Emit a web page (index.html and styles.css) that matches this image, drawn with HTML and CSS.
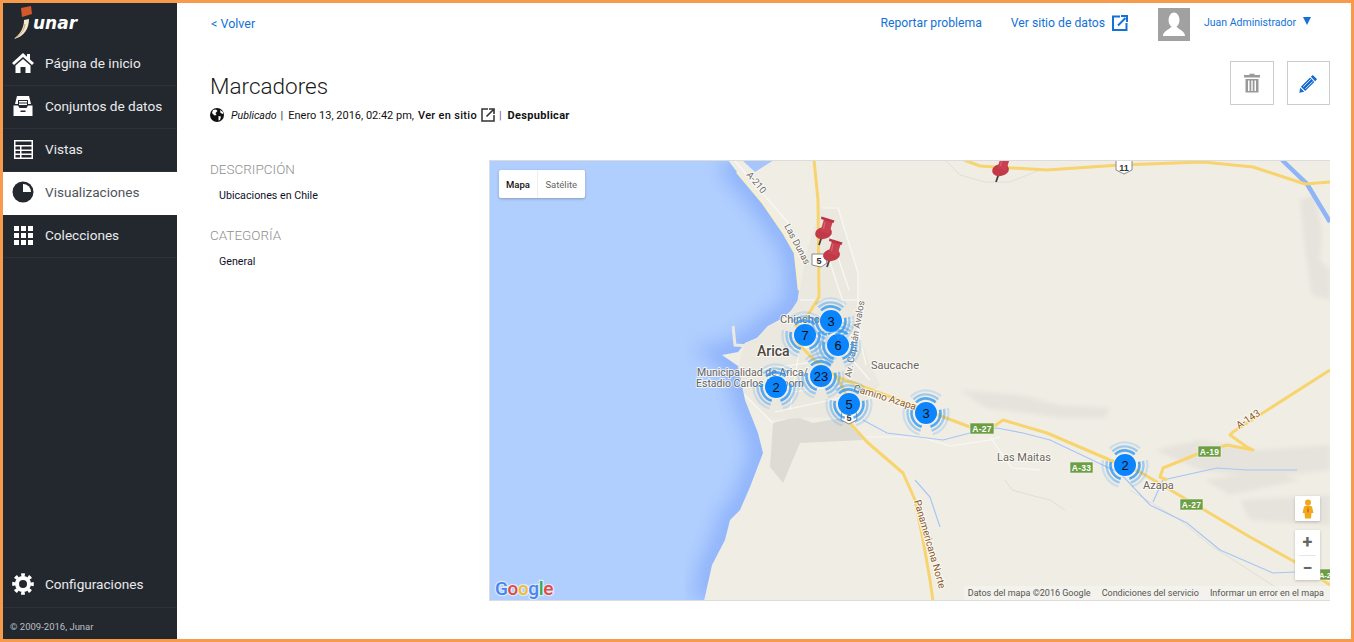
FILE: index.html
```html
<!DOCTYPE html>
<html lang="es">
<head>
<meta charset="utf-8">
<title>Marcadores</title>
<link rel="stylesheet" href="styles.css">
</head>
<body>
<aside class="sidebar">
  <div class="logo">
    <svg class="logo-mark" viewBox="0 0 30 36" width="30" height="36">
      <path d="M9 4 L19 2 L20 10 L10 13 Z" fill="#d4582a"/>
      <path d="M12 16 L17 15 C17 24 13 32 2 35 C8 30 12 24 12 16 Z" fill="#f3e9d2"/>
      <path d="M3 34 C9 31 12 26 13 20" stroke="#d9a05b" stroke-width="1" fill="none"/>
    </svg>
    <span class="logo-word">unar</span>
  </div>
  <nav class="nav">
    <a class="nav-item">
      <svg class="nav-icon" viewBox="0 0 22 22"><path d="M11 1 L0 11 L2 13 L11 5 L20 13 L22 11 L18 7.400 V2 H15 V4.700 Z" fill="#fff"/><path d="M3.500 13.500 L11 7 L18.500 13.500 V21 H13.500 V15 H8.500 V21 H3.500 Z" fill="#fff"/></svg>
      <span>Página de inicio</span>
    </a>
    <a class="nav-item">
      <svg class="nav-icon" viewBox="0 0 22 22"><path d="M5 1 H17 L19 9 H16 V5 H6 V9 H3 Z M7 6 H15 V7.500 H7 Z M7 8.500 H15 V10 H7 Z" fill="#fff"/><path d="M1.500 10.500 H6 L7.500 13 H14.500 L16 10.500 H20.500 V21 H1.500 Z" fill="#fff"/><rect x="8.500" y="15.500" width="5" height="1.500" fill="#23282f"/></svg>
      <span>Conjuntos de datos</span>
    </a>
    <a class="nav-item">
      <svg class="nav-icon" viewBox="0 0 22 22"><path d="M2 2 H21 V21 H2 Z M3.500 3.500 V7 H19.500 V3.500 Z M3.500 8.500 V11.500 H8 V8.500 Z M9.500 8.500 V11.500 H19.500 V8.500 Z M3.500 13 V15.500 H8 V13 Z M9.500 13 V15.500 H19.500 V13 Z M3.500 17 V19.500 H8 V17 Z M9.500 17 V19.500 H19.500 V17 Z" fill="#fff" fill-rule="evenodd"/></svg>
      <span>Vistas</span>
    </a>
    <a class="nav-item is-active">
      <svg class="nav-icon" viewBox="0 0 22 22"><circle cx="11" cy="11" r="10.500" fill="#23282f"/><path d="M11 11 V3 A8 8 0 0 1 19 11 Z" fill="#fff"/></svg>
      <span>Visualizaciones</span>
    </a>
    <a class="nav-item">
      <svg class="nav-icon" viewBox="0 0 22 22"><g fill="#fff"><rect x="2" y="2" width="5" height="5"/><rect x="9" y="2" width="5" height="5"/><rect x="16" y="2" width="5" height="5"/><rect x="2" y="9" width="5" height="5"/><rect x="9" y="9" width="5" height="5"/><rect x="16" y="9" width="5" height="5"/><rect x="2" y="16" width="5" height="5"/><rect x="9" y="16" width="5" height="5"/><rect x="16" y="16" width="5" height="5"/></g></svg>
      <span>Colecciones</span>
    </a>
  </nav>
  <div class="side-bottom">
    <a class="nav-item nav-config">
      <svg class="nav-icon" viewBox="0 0 22 22"><circle cx="11" cy="11" r="6" fill="none" stroke="#fff" stroke-width="4"/><circle cx="11" cy="11" r="9" fill="none" stroke="#fff" stroke-width="3.600" pathLength="80" stroke-dasharray="5 5" transform="rotate(-11 11 11)"/></svg>
      <span>Configuraciones</span>
    </a>
    <div class="copyright">© 2009-2016, Junar</div>
  </div>
</aside>

<main class="main">
  <header class="topbar">
    <a class="link back">&lt; Volver</a>
    <div class="top-right">
      <a class="link report">Reportar problema</a>
      <a class="link site">Ver sitio de datos
        <svg class="ext-blue" viewBox="0 0 16 16" width="16" height="16"><path d="M8 1.500 H1 V15 H14.500 V8" fill="none" stroke="#1272d8" stroke-width="2"/><path d="M6 10.500 L13.500 3 M9 1 H15 V7" fill="none" stroke="#1272d8" stroke-width="2"/></svg>
      </a>
      <div class="avatar">
        <svg viewBox="0 0 32 33" width="32" height="33"><rect width="32" height="33" fill="#a1a1a1"/><ellipse cx="16" cy="12" rx="5.500" ry="7.500" fill="#fff"/><path d="M5 28 C5 23 11 22 13 19 H19 C21 22 27 23 27 28 Z" fill="#fff"/></svg>
      </div>
      <a class="link user">Juan Administrador</a>
      <span class="caret"></span>
    </div>
  </header>

  <section class="title-row">
    <div>
      <h1 class="title">Marcadores</h1>
      <div class="meta">
        <svg class="globe" viewBox="0 0 14 14" width="14" height="14"><circle cx="7" cy="7" r="7" fill="#111"/><path d="M3 2 L6 1.500 L7.500 3 L5.500 5 L6.500 7 L4.500 7.500 L2 5 Z M8.500 8 L11 8.500 L10 12 L8.500 12.500 Z M10 2 L13 4 L13 6 L10.500 5 Z" fill="#fff"/></svg>
        <em class="status">Publicado</em>
        <span class="sep">|</span>
        <span class="date">Enero 13, 2016, 02:42 pm,</span>
        <a class="meta-link">Ver en sitio</a>
        <svg class="ext-dark" viewBox="0 0 14 14" width="14" height="14"><path d="M7 1 H1 V13 H13 V7" fill="none" stroke="#333" stroke-width="1.500"/><path d="M5.500 8.500 L12 2 M8 1 H13 V6" fill="none" stroke="#333" stroke-width="1.600"/></svg>
        <span class="sep sep-purple">|</span>
        <a class="meta-link bold">Despublicar</a>
      </div>
    </div>
    <div class="actions">
      <button class="action" type="button" aria-label="Eliminar">
        <svg viewBox="0 0 18 20" width="18" height="20"><path d="M6.500 2 V0.800 H11.500 V2 H17 V4.500 H1 V2 Z" fill="#999"/><path d="M2.500 6 H15.500 V19.500 H2.500 Z M5 7.500 V18 H6.500 V7.500 Z M8.300 7.500 V18 H9.700 V7.500 Z M11.500 7.500 V18 H13 V7.500 Z" fill="#999" fill-rule="evenodd"/></svg>
      </button>
      <button class="action" type="button" aria-label="Editar">
        <svg viewBox="0 0 20 20" width="19" height="19"><path d="M14.500 1 L19 5.500 L17 7.500 L12.500 3 Z M11.700 3.800 L16.200 8.300 L6.500 18 L2 13.500 Z" fill="#1468cf"/><path d="M1.300 14.500 L5.500 18.700 L0.300 19.700 Z" fill="#1468cf"/><path d="M4.500 13.500 L12.500 5.500 M6.800 15.500 L14.500 7.800" stroke="#fff" stroke-width=".9"/></svg>
      </button>
    </div>
  </section>

  <section class="content">
    <div class="details">
      <h2 class="label">DESCRIPCIÓN</h2>
      <p class="value">Ubicaciones en Chile</p>
      <h2 class="label label-next">CATEGORÍA</h2>
      <p class="value">General</p>
    </div>

    <div class="map">
      <svg class="map-canvas" viewBox="489 160 841 441" width="841" height="441">
        <defs>
          <filter id="soft" x="-5%" y="-5%" width="110%" height="110%"><feGaussianBlur stdDeviation="0.450"/></filter>
          <filter id="blur2" x="-10%" y="-10%" width="120%" height="120%"><feGaussianBlur stdDeviation="2"/></filter>
          <filter id="blur8" x="-20%" y="-20%" width="140%" height="140%"><feGaussianBlur stdDeviation="10"/></filter>
          <g id="cluster">
            <g fill="none" stroke="#2f97f3">
              <circle r="14.500" stroke-width="2.600" pathLength="360" stroke-dasharray="85 35" transform="rotate(107)" opacity=".8"/>
              <circle r="18.500" stroke-width="2.400" pathLength="360" stroke-dasharray="85 35" transform="rotate(107)" opacity=".42"/>
              <circle r="22.500" stroke-width="2.200" pathLength="360" stroke-dasharray="85 35" transform="rotate(107)" opacity=".18"/>
            </g>
            <circle r="12" fill="#fff" opacity=".35"/>
            <circle r="11" fill="#0b85fd"/>
          </g>
          <g id="pin">
            <path d="M0 0 L3 -9" stroke="#444" stroke-width="1.800"/>
            <ellipse cx="4.500" cy="-12" rx="8.500" ry="6" transform="rotate(-12 4.500 -12)" fill="#c23a48"/>
            <path d="M1.500 -14 L5 -26 L14 -24 L10 -11 Z" fill="#c94150"/>
            <path d="M2.500 -28.500 L15.500 -24.500 L14.500 -22 L2 -26 Z" fill="#b93342"/>
            <path d="M6 -23 L4.500 -16" stroke="#e47a80" stroke-width="1.200" opacity=".6"/>
          </g>
        </defs>

        <rect x="489" y="160" width="841" height="441" class="water"/>
        <path d="M728 160 L737 172 L763 203 L783 232 L795 253 L799 290 L797 305 L783 318 L768 326 L757 338 L745 343 L738 352 L722 355 L738 366 L745 400 L758 433 L763 453 L750 487 L740 510 L730 520 L725 540 L712 565 L704 601" class="coast-glow" filter="url(#blur8)"/>
        <path d="M728 160 L737 172 L763 203 L783 232 L795 253 L799 290 L797 305 L783 318 L768 326 L757 338 L745 343 L738 352 L722 355 L738 366 L745 400 L758 433 L763 453 L750 487 L740 510 L730 520 L725 540 L712 565 L704 601 L1330 601 L1330 160 Z" class="land" filter="url(#soft)"/>
        <path d="M733 326 L735 345 L752 346" class="breakwater" filter="url(#soft)"/>
        <path d="M737 172 L763 203 L783 232 L795 253 L799 290" class="beach"/>
        <path d="M742 160 L755 172 L774 160 Z" class="inlet"/>

        <g class="shades" filter="url(#blur2)">
          <path d="M960 390 L1020 395 L1060 405 L1110 408 L1105 418 L1060 418 L1020 412 L985 408 Z"/>
          <path d="M1300 200 L1315 195 L1322 230 L1320 260 L1330 270 L1330 300 L1312 295 L1305 250 Z"/>
          <path d="M1155 450 L1200 440 L1260 450 L1330 445 L1330 470 L1260 478 L1200 470 Z"/>
          <path d="M1240 500 L1330 495 L1330 525 L1250 520 Z"/>
          <path d="M1205 480 L1270 470 L1300 480 L1230 495 Z"/>
        </g>
        <path d="M770 467 L783 483 L800 443 L863 440 L847 417 L813 423 L797 417 L773 423 Z" class="gray-zone" filter="url(#soft)"/>
        <path d="M806 255 L820 208 L838 208 L858 275 L858 330 L870 365 L880 385 L850 417 L800 418 L770 420 L745 395 L738 366 L745 343 L757 338 L768 326 L785 320 L798 300 Z" class="urban" filter="url(#soft)"/>

        <g class="streets" filter="url(#soft)">
          <path d="M822 208 H838 L858 273 V330 L866 365"/>
          <path d="M829 230 L849 290 M826 250 L844 305 M808 320 H855 M800 300 L858 300 M790 340 L850 332 M760 352 L830 345 M748 372 L825 360 M765 395 L850 385 M775 412 L840 398"/>
          <path d="M773 423 L745 395 M845 352 L870 380 M800 345 L790 410"/>
          <path d="M867 437 L920 437 L950 446 L990 440 L1000 437"/>
          <path d="M734 160 L790 225"/>
          <path d="M990 437 L1012 468 L1040 470 M1070 468 L1100 460"/>
        </g>
        <g class="faint-lines" filter="url(#soft)">
          <path d="M1005 480 L1012 490 L1030 495 L1050 500 L1065 510"/>
          <path d="M1130 490 L1180 520 L1210 545 L1280 590"/>
          <path d="M945 160 L960 175 L985 182 L1010 182 L1040 170"/>
        </g>

        <g class="rivers" filter="url(#soft)">
          <path d="M863 420 L887 433 L943 440 L970 433 L997 428 L1023 433 L1050 440 L1107 467 L1120 473 L1150 505 L1187 523 L1220 550 L1273 573 L1295 572"/>
          <path d="M1153 502 L1163 480 L1217 468 L1247 470 L1297 470"/>
          <path d="M915 480 L930 497 L940 527"/>
        </g>
        <path d="M1282 160 L1307 184 L1330 222" class="river-wide" filter="url(#soft)"/>

        <g class="roads" filter="url(#soft)">
          <path d="M814 160 L818 200 L819 297 L808 315 L795 327"/>
          <path d="M795 340 L812 358 L837 377 L852 405 L850 423 L867 442 L903 473 L915 500 L923 540 L930 580 L933 601"/>
          <path d="M837 377 L880 393 L970 427 L993 427 L1003 420 L1047 433 L1110 460 L1140 472 L1250 537 L1295 562 L1330 585"/>
          <path d="M1330 370 L1233 432 L1230 435 L1247 447 L1253 450 L1227 445 L1200 453 L1163 468 L1160 477 L1167 480"/>
          <path d="M964 160 L980 166 L1047 170 L1120 165 L1203 162 L1253 167 L1305 184 L1330 182"/>
        </g>

        <g class="shield-green">
          <rect x="970" y="423" width="24" height="11"/><text x="982" y="432">A-27</text>
          <rect x="1070" y="462" width="23" height="11"/><text x="1081.500" y="471">A-33</text>
          <rect x="1198" y="446" width="23" height="11"/><text x="1209.500" y="455">A-19</text>
          <rect x="1180" y="499" width="23" height="11"/><text x="1191.500" y="508">A-27</text>
          <rect x="1320" y="569" width="12" height="11"/><text x="1325" y="578" class="shield-cut">A-2</text>
        </g>
        <g class="shield-white">
          <path d="M812 254 H825 L827 263 L821 267 L812 265 Z"/><text x="819" y="264">5</text>
          <path d="M842 411 H856 L857 420 L849 424 L841 420 Z"/><text x="849" y="421">5</text>
          <path d="M1116 160 H1132 L1132 170 L1124 174 L1116 170 Z"/><text x="1124" y="171">11</text>
        </g>

        <g class="map-text">
          <text x="780" y="323" class="t-place">Chinchorro</text>
          <text x="757" y="356" class="t-city">Arica</text>
          <text x="871" y="369" class="t-place">Saucache</text>
          <text x="697" y="376" class="t-small">Municipalidad de Arica/</text>
          <text x="696" y="387" class="t-small">Estadio Carlos Dittborn</text>
          <text x="997" y="461" class="t-place">Las Maitas</text>
          <text x="1143" y="489" class="t-place">Azapa</text>
          <text class="t-road" transform="translate(853 391) rotate(17)">Camino Azapa</text>
          <text class="t-road-gray" transform="translate(851 378) rotate(-80)">Av. Capitán Avalos</text>
          <text class="t-road-gray" transform="translate(784 226) rotate(62)">Las Dunas</text>
          <text class="t-road-gray" transform="translate(746 175) rotate(50)">A-210</text>
          <text class="t-road" transform="translate(914 501) rotate(74)">Panamericana Norte</text>
          <text class="t-road" transform="translate(1239 429) rotate(-33)">A-143</text>
        </g>

        <use href="#pin" x="819" y="245"/>
        <use href="#pin" x="827" y="267"/>
        <use href="#pin" x="996" y="182"/>

        <use href="#cluster" x="776" y="387"/>
        <use href="#cluster" x="821" y="376"/>
        <use href="#cluster" x="849" y="404"/>
        <use href="#cluster" x="926" y="413"/>
        <use href="#cluster" x="1125" y="465"/>
        <use href="#cluster" x="838" y="345"/>
        <use href="#cluster" x="805" y="335"/>
        <use href="#cluster" x="831" y="321"/>
        <g class="cluster-num">
          <text x="776" y="392">2</text>
          <text x="821" y="381">23</text>
          <text x="849" y="409">5</text>
          <text x="926" y="418">3</text>
          <text x="1125" y="470">2</text>
          <text x="838" y="350">6</text>
          <text x="805" y="340">7</text>
          <text x="831" y="326">3</text>
        </g>

        <text x="495" y="595" class="google"><tspan fill="#4a85ef">G</tspan><tspan fill="#e8483c">o</tspan><tspan fill="#f4bd25">o</tspan><tspan fill="#4a85ef">g</tspan><tspan fill="#34a853">l</tspan><tspan fill="#e8483c">e</tspan></text>
      </svg>

      <div class="map-type">
        <span class="type-btn is-on">Mapa</span>
        <span class="type-btn">Satélite</span>
      </div>
      <div class="map-tools">
        <div class="pegman">
          <svg viewBox="0 0 12 20" width="12" height="20"><circle cx="6" cy="3.500" r="3" fill="#f2a81d"/><path d="M2 7.500 Q6 5.500 10 7.500 L11.500 14 L9.500 14 L9 19.500 H3 L2.500 14 L0.500 14 Z" fill="#f2a81d"/><path d="M6 7 L7 12 L6 14 L5 12 Z" fill="#d9661f"/></svg>
        </div>
        <div class="zoom-box">
          <span class="zoom-btn">+</span>
          <span class="zoom-line"></span>
          <span class="zoom-btn">−</span>
        </div>
      </div>
      <div class="attribution">
        <span>Datos del mapa ©2016 Google</span>
        <span>Condiciones del servicio</span>
        <span>Informar un error en el mapa</span>
      </div>
    </div>
  </section>
</main>
</body>
</html>
```

FILE: styles.css
```css
* { box-sizing: border-box; }
html, body { margin: 0; padding: 0; height: 100%; overflow: hidden; }
body {
  width: 1354px;
  height: 642px;
  display: flex;
  border: 3px solid #f79a4b;
  background: #fff;
  font-family: Roboto, "Liberation Sans", sans-serif;
  color: #111;
}

/* Sidebar */
.sidebar {
  width: 174px;
  flex: none;
  display: flex;
  flex-direction: column;
  background: #23282f;
}
.logo { height: 40px; display: flex; align-items: flex-start; padding: 1px 0 0 9px; }
.logo-mark { display: block; flex: none; }
.logo-word {
  margin: 9px 0 0 -9px;
  font-family: "DejaVu Sans", sans-serif;
  font-weight: 700;
  font-style: italic;
  font-size: 17px;
  line-height: 20px;
  color: #fff;
}
.nav { display: flex; flex-direction: column; }
.nav-item {
  height: 43px;
  display: flex;
  align-items: center;
  gap: 11px;
  padding: 0 0 3px 9px;
  border-bottom: 1px solid #2d323a;
  color: #e9eaec;
  font-size: 13.6px;
}
.nav-item.is-active { background: #fff; color: #50545b; border-bottom-color: #fff; }
.nav-icon { width: 22px; height: 22px; flex: none; }
.side-bottom { margin-top: auto; }
.nav-config { height: 49px; padding: 2px 0 0 9px; }
.copyright { height: 31px; padding: 13px 0 0 7px; font-size: 9.500px; line-height: 12px; color: #bdbfc2; }

/* Main */
.main { flex: 1; min-width: 0; padding-right: 21px; display: flex; flex-direction: column; }
.topbar { height: 40px; padding-left: 34px; display: flex; justify-content: space-between; align-items: center; }
.link { color: #1272d8; font-size: 12.2px; }
.back { font-size: 12.500px; }
.top-right { display: flex; align-items: center; height: 100%; }
.report { margin-right: 29px; margin-top: -1px; }
.site { display: flex; align-items: center; gap: 7px; margin-right: 30px; }
.avatar { width: 32px; height: 33px; margin-right: 14px; margin-top: 3px; }
.avatar svg { display: block; }
.user { font-size: 10.500px; margin-right: 7px; margin-top: -2px; }
.caret {
  width: 0; height: 0;
  margin: -5px 19px 0 0;
  border-left: 4.500px solid transparent;
  border-right: 4.500px solid transparent;
  border-top: 8px solid #1272d8;
}

.title-row { height: 117px; padding: 18px 0 0 33px; display: flex; justify-content: space-between; align-items: flex-start; }
.title { margin: 11px 0 0; font-size: 22.500px; line-height: 28px; font-weight: 300; color: #1a1a1a; }
.meta { margin-top: 7px; height: 16px; display: flex; align-items: center; font-size: 11px; color: #111; }
.globe { margin-right: 7px; }
.status { margin-right: 4px; font-size: 10.600px; }
.sep { margin-right: 5px; color: #333; }
.sep-purple { margin: 0 6px 0 4px; color: #7a5aa0; }
.date { margin-right: 4px; }
.meta-link { font-weight: 500; letter-spacing: 0.3px; margin-right: 4px; }
.meta-link.bold { font-weight: 700; margin-right: 0; }
.actions { display: flex; gap: 13px; }
.action {
  width: 44px; height: 44px;
  padding: 0;
  display: flex; align-items: center; justify-content: center;
  background: #fff;
  border: 1px solid #ccc;
}
.action + .action { width: 43px; }

.content { display: flex; padding-left: 33px; }
.details { width: 279px; flex: none; }
.label { margin: 1px 0 0; font-size: 13.500px; line-height: 16px; font-weight: 300; color: #8f8f8f; }
.label-next { margin-top: 24px; }
.value { margin: 12px 0 0 9px; font-size: 10.700px; line-height: 14px; color: #10102a; }

/* Map */
.map {
  position: relative;
  width: 841px;
  height: 441px;
  overflow: hidden;
}
.map::after {
  content: "";
  position: absolute;
  inset: 0;
  border: 1px solid #dcdcdc;
  border-right: 0;
  pointer-events: none;
}
.map-canvas { display: block; }
.water { fill: #b1cffe; }
.coast-glow { fill: none; stroke: #86acfa; stroke-width: 24; opacity: .85; }
.land { fill: #f0ede5; }
.breakwater { fill: none; stroke: #ece9e0; stroke-width: 3; }
.beach { fill: none; stroke: #f7efcb; stroke-width: 2.500; }
.inlet { fill: #a6c5fb; }
.shades path { fill: #e6e3dc; }
.gray-zone { fill: #dedbd4; }
.urban { fill: #ebe8e0; }
.streets path { fill: none; stroke: #f9f8f4; stroke-width: 1.200; }
.faint-lines path { fill: none; stroke: #e2ded6; stroke-width: 1; }
.rivers path { fill: none; stroke: #a6c6f6; stroke-width: 1.200; }
.river-wide { fill: none; stroke: #8fb5f6; stroke-width: 4.500; }
.roads path { fill: none; stroke: #f8d46e; stroke-width: 3; stroke-linejoin: round; }

.shield-green rect { fill: #6c9f43; stroke: #f5f3ea; stroke-width: .6; }
.shield-green text { font: 700 8.500px "Liberation Sans", sans-serif; fill: #fff; text-anchor: middle; letter-spacing: .3px; }
.shield-green .shield-cut { font-size: 7.500px; letter-spacing: 0; }
.shield-white path { fill: #fff; stroke: #8a8a8a; stroke-width: 1; }
.shield-white text { font: 700 9px "Liberation Sans", sans-serif; fill: #333; text-anchor: middle; }

.map-text text { paint-order: stroke; stroke: rgba(255,255,255,.75); stroke-width: 2px; }
.t-place { font: 400 11px Roboto, sans-serif; fill: #6b6457; }
.t-city { font: 500 14px Roboto, sans-serif; fill: #4d463a; }
.t-small { font: 400 10.500px Roboto, sans-serif; fill: #6b6457; }
.t-road { font: 400 10px Roboto, sans-serif; fill: #8a5b1f; }
.t-road-gray { font: 400 9.500px Roboto, sans-serif; fill: #6f6a60; }

.cluster-num text { font: 400 13px "Liberation Sans", sans-serif; fill: #111; text-anchor: middle; }
.google {
  font: 500 19px Roboto, sans-serif;
  letter-spacing: -.4px;
  paint-order: stroke;
  stroke: rgba(255,255,255,.55);
  stroke-width: 2.500px;
}

.map-type {
  position: absolute;
  left: 10px; top: 10px;
  height: 28px;
  display: flex;
  background: #fff;
  border-radius: 2px;
  box-shadow: 0 1px 3px rgba(0,0,0,.25);
  font-size: 9.500px;
}
.type-btn { display: flex; align-items: center; padding: 0 7.500px; color: #666; }
.type-btn.is-on { color: #111; font-weight: 500; padding: 0 7px; border-right: 1px solid #eee; }

.map-tools {
  position: absolute;
  left: 806px; top: 336px;
  width: 25px;
  display: flex;
  flex-direction: column;
  gap: 9px;
}
.pegman, .zoom-box { background: #fff; box-shadow: 0 1px 3px rgba(0,0,0,.2); border-radius: 1px; }
.pegman { height: 25px; display: flex; align-items: center; justify-content: center; }
.zoom-box { height: 50px; display: flex; flex-direction: column; align-items: center; }
.zoom-btn { flex: 1; display: flex; align-items: center; justify-content: center; font-size: 18px; font-weight: 700; color: #666; line-height: 1; }
.zoom-line { width: 17px; height: 1px; background: #e6e6e6; }

.attribution {
  position: absolute;
  right: 0; bottom: 1px;
  height: 14px;
  display: flex;
  align-items: center;
  gap: 11px;
  padding: 0 6px 0 4px;
  background: rgba(245,243,238,.8);
  font-size: 9px;
  color: #555;
}
```
